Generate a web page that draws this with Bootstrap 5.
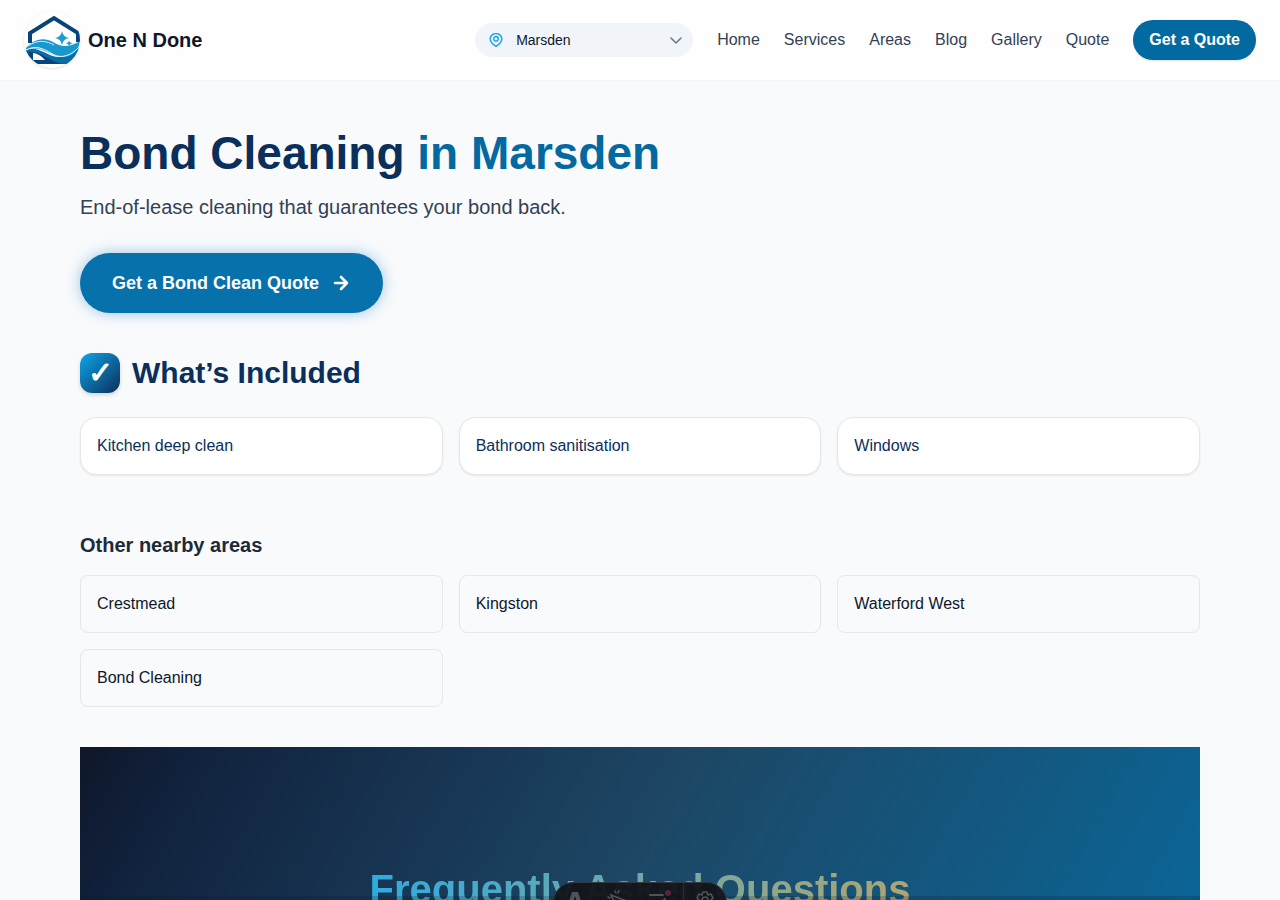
<!DOCTYPE html>
<html lang="en">
<head>
<meta charset="utf-8">
<meta name="viewport" content="width=device-width, initial-scale=1">
<title>Bond Cleaning in Marsden | One N Done</title>
<link href="https://cdn.jsdelivr.net/npm/bootstrap@5.3.0/dist/css/bootstrap.min.css" rel="stylesheet">
<style>
  :root { --navy: #0b2f5b; --brand: #0369a1; --ink: #0f172a; --slate: #334155; --line: #e2e8f0; }
  body { font-family: "Liberation Sans", Arial, sans-serif; font-size: 16px; line-height: 24px; color: var(--ink); background: #f8fafc; }
  a { text-decoration: none; }
  .site-header { background: #fefefe; border-bottom: 1px solid #f1f5f9; min-height: 81px; }
  .brand-name { font-size: 20px; line-height: 28px; font-weight: 700; color: var(--ink); }
  .brand-logo { width: 56px; height: 56px; border-radius: 50%; background: #fff; box-shadow: 0 1px 3px rgba(0,0,0,.12); }
  .suburb-picker { width: 218px; height: 34px; background: #f1f5f9; padding: 0 10px 0 14px; gap: 13px; }
  .suburb-picker select { appearance: none; border: 0; background: transparent; color: var(--ink); font-size: 14px; line-height: 20px; outline: 0; padding: 0; min-width: 0; }
  .nav-gap { gap: 24px; }
  .nav-item-link { color: var(--slate); }
  .btn-brand { --bs-btn-color: #fff; --bs-btn-bg: var(--brand); --bs-btn-hover-color: #fff; --bs-btn-hover-bg: #075985; --bs-btn-border-width: 0; font-weight: 700; }
  .btn-top { padding: 8px 16px; line-height: 24px; box-shadow: 0 1px 2px rgba(0,0,0,.12); }
  .btn-hero { --bs-btn-bg: #0671ab; min-height: 60px; padding: 16px 32px; font-size: 18px; line-height: 28px; gap: 12px; box-shadow: 0 0 14px rgba(14,120,190,.4); }
  .page-wrap { max-width: 1120px; padding-top: 48px; }
  .hero-title { font-size: 46px; line-height: 48px; font-weight: 700; color: var(--navy); margin-bottom: 16px; }
  .hero-title span { color: var(--brand); }
  .hero-text { font-size: 20px; line-height: 28px; color: var(--slate); margin-bottom: 32px; }
  .section-head { gap: 12px; margin: 40px 0 24px; }
  .section-title { font-size: 30px; line-height: 36px; font-weight: 700; color: var(--navy); }
  .check-tile { width: 40px; height: 40px; border-radius: 12px; color: #fff; font-size: 30px; line-height: 36px; font-weight: 700; background: linear-gradient(135deg, #0ea5e9, #0b2f5b); box-shadow: 0 2px 4px rgba(0,0,0,.15); }
  .feature-box { background: #fff; border: 1px solid #e5e7eb; border-radius: 16px; padding: 16px; color: var(--navy); box-shadow: 0 1px 2px rgba(0,0,0,.08); }
  .nearby-title { font-size: 20px; line-height: 28px; font-weight: 700; color: #1f2937; margin: 56px 0 16px; }
  .area-box { border: 1px solid var(--line); border-radius: 8px; padding: 16px; color: var(--ink); }
  .faq { margin-top: 40px; padding: 118px 24px; min-height: 620px; background: linear-gradient(120deg, #0f172a 0%, #11233f 9%, #1d4765 42%, #0b6596 82%, #0369a1 100%); }
  .faq::after { content: ""; position: absolute; left: 0; right: 0; top: 149px; height: 80px; background: rgba(11,23,42,.2); }
  .faq-title { width: fit-content; font-size: 40px; line-height: 48px; font-weight: 700; color: transparent; background: linear-gradient(90deg, #2fabdf, #b0a570); background-clip: text; -webkit-background-clip: text; }
  .dev-bar { width: 174px; height: 40px; bottom: -22px; border-radius: 20px; background: rgba(19,21,26,.96); border: 1px solid #343841; }
  .dev-bar button { border: 0; background: transparent; color: #50535a; padding: 0 0 4px; }
  .dev-bar button:last-child { border-left: 1px solid #2a2d34; }
  .dev-bar svg { display: block; margin: 0 auto; }
</style>
</head>
<body class="vh-100 overflow-hidden">
<header class="site-header d-flex align-items-center justify-content-between px-4">
  <a href="#" class="d-flex align-items-center gap-2">
    <svg class="brand-logo" viewBox="0 0 56 56" aria-hidden="true">
      <path d="M6 31V21L30 6 54 21V30" fill="none" stroke="#07447b" stroke-width="4"/>
      <path d="M2 38H9L30 47 46 48 44 52H4Z" fill="#07447b"/>
      <path d="M9 41Q16 42 21 48H9Z" fill="#fff"/>
      <path d="M2 38C14 33 22 44 34 45 44 46 50 39 56 34 54 44 49 50 42 52 28 53 18 38 2 40Z" fill="#0b6ca3"/>
      <path d="M2 36C8 29 18 24 29 30 38 36 46 35 56 29 55 39 48 45 39 45 26 45 18 32 2 38Z" fill="#1798cf"/>
      <path d="M2 38C16 31 24 41 33 44 42 46 50 41 56 34" fill="none" stroke="#fff" stroke-width="1"/>
      <path d="M4 34C14 27 23 29 30 33" fill="none" stroke="#d7eef8" stroke-width="1"/>
      <path d="M38 19Q39 25 45 26 39 27 38 33 37 27 31 26 37 25 38 19Z" fill="#1c9dd1"/>
      <path d="M45 28Q45 31 49 31 45 32 45 35 45 32 42 31 45 31 45 28Z" fill="#1c9dd1"/>
    </svg>
    <span class="brand-name">One N Done</span>
  </a>
  <div class="nav-gap d-flex align-items-center">
    <div class="suburb-picker rounded-pill d-flex align-items-center">
      <svg width="14" height="14" viewBox="0 0 24 24" fill="none" stroke="#0ea5e9" stroke-width="2.4" stroke-linecap="round" stroke-linejoin="round" aria-hidden="true"><path d="M22 10c0 7-10 13-10 13S2 17 2 10a10 9 0 0 1 20 0Z"/><circle cx="12" cy="10" r="4"/></svg>
      <select class="flex-grow-1" aria-label="Suburb"><option>Marsden</option><option>Crestmead</option><option>Kingston</option></select>
      <svg width="14" height="14" viewBox="0 0 14 14" fill="none" stroke="#64748b" stroke-width="1.5" stroke-linecap="round" stroke-linejoin="round" aria-hidden="true"><path d="M2 5l5 5 5-5"/></svg>
    </div>
    <nav class="nav-gap d-flex align-items-center" aria-label="Main">
      <a class="nav-item-link" href="#">Home</a>
      <a class="nav-item-link" href="#">Services</a>
      <a class="nav-item-link" href="#">Areas</a>
      <a class="nav-item-link" href="#">Blog</a>
      <a class="nav-item-link" href="#">Gallery</a>
      <a class="nav-item-link" href="#">Quote</a>
    </nav>
    <a href="#" class="btn btn-brand btn-top rounded-pill">Get a Quote</a>
  </div>
</header>
<main class="page-wrap mx-auto">
  <h1 class="hero-title">Bond Cleaning <span>in Marsden</span></h1>
  <p class="hero-text">End-of-lease cleaning that guarantees your bond back.</p>
  <a href="#" class="btn btn-brand btn-hero rounded-pill d-inline-flex align-items-center">Get a Bond Clean Quote
    <svg width="20" height="20" viewBox="0 0 20 20" fill="none" stroke="currentColor" stroke-width="2.6" stroke-linecap="round" stroke-linejoin="round" aria-hidden="true"><path d="M4 10h12M10 4l6 6-6 6"/></svg>
  </a>

  <div class="section-head d-flex align-items-center">
    <span class="check-tile d-flex align-items-center justify-content-center" aria-hidden="true">✓</span>
    <h2 class="section-title mb-0">What’s Included</h2>
  </div>
  <div class="row row-cols-3 g-3">
    <div class="col"><div class="feature-box">Kitchen deep clean</div></div>
    <div class="col"><div class="feature-box">Bathroom sanitisation</div></div>
    <div class="col"><div class="feature-box">Windows</div></div>
  </div>

  <h2 class="nearby-title">Other nearby areas</h2>
  <div class="row row-cols-3 g-3">
    <div class="col"><a href="#" class="area-box d-block">Crestmead</a></div>
    <div class="col"><a href="#" class="area-box d-block">Kingston</a></div>
    <div class="col"><a href="#" class="area-box d-block">Waterford West</a></div>
    <div class="col"><a href="#" class="area-box d-block">Bond Cleaning</a></div>
  </div>

  <section class="faq position-relative">
    <h2 class="faq-title mx-auto mb-0">Frequently Asked Questions</h2>
  </section>
</main>

<div class="dev-bar position-fixed start-50 translate-middle-x d-flex overflow-hidden" role="toolbar" aria-label="Developer tools">
  <button class="flex-fill" aria-label="Menu"><svg width="20" height="20" viewBox="0 0 20 20" fill="currentColor"><path d="M7 2h6l5 15-6-2H8l-6 2Z"/><path d="M10 6 8 12h4Z" fill="#13151a"/></svg></button>
  <button class="flex-fill" aria-label="Inspect"><svg width="20" height="20" viewBox="0 0 20 20" fill="none" stroke="currentColor" stroke-width="1.6" stroke-linecap="round"><path d="M4 5l13 5-5 2-2 5ZM8 1l1 2M12 1l-1 2M1 7l2 1"/></svg></button>
  <button class="flex-fill" aria-label="Audit"><svg width="24" height="20" viewBox="0 0 24 20" fill="none" stroke="currentColor" stroke-width="1.8" stroke-linecap="round"><path d="M2 5h13M2 11h8M14 12l3-3"/><circle cx="20" cy="3" r="3" fill="#56263b" stroke="none"/></svg></button>
  <button class="flex-fill" aria-label="Settings"><svg width="20" height="20" viewBox="0 0 20 20" fill="none" stroke="currentColor" stroke-width="1.6" stroke-linejoin="round"><path d="M8 2h4l1 3 3-1 2 4-2 2 2 3-2 3-3-1-1 3H8l-1-3-3 1-2-3 2-3-2-2 2-4 3 1Z"/><circle cx="10" cy="10" r="3"/></svg></button>
</div>
<script src="https://cdn.jsdelivr.net/npm/bootstrap@5.3.0/dist/js/bootstrap.bundle.min.js"></script>
</body>
</html>
